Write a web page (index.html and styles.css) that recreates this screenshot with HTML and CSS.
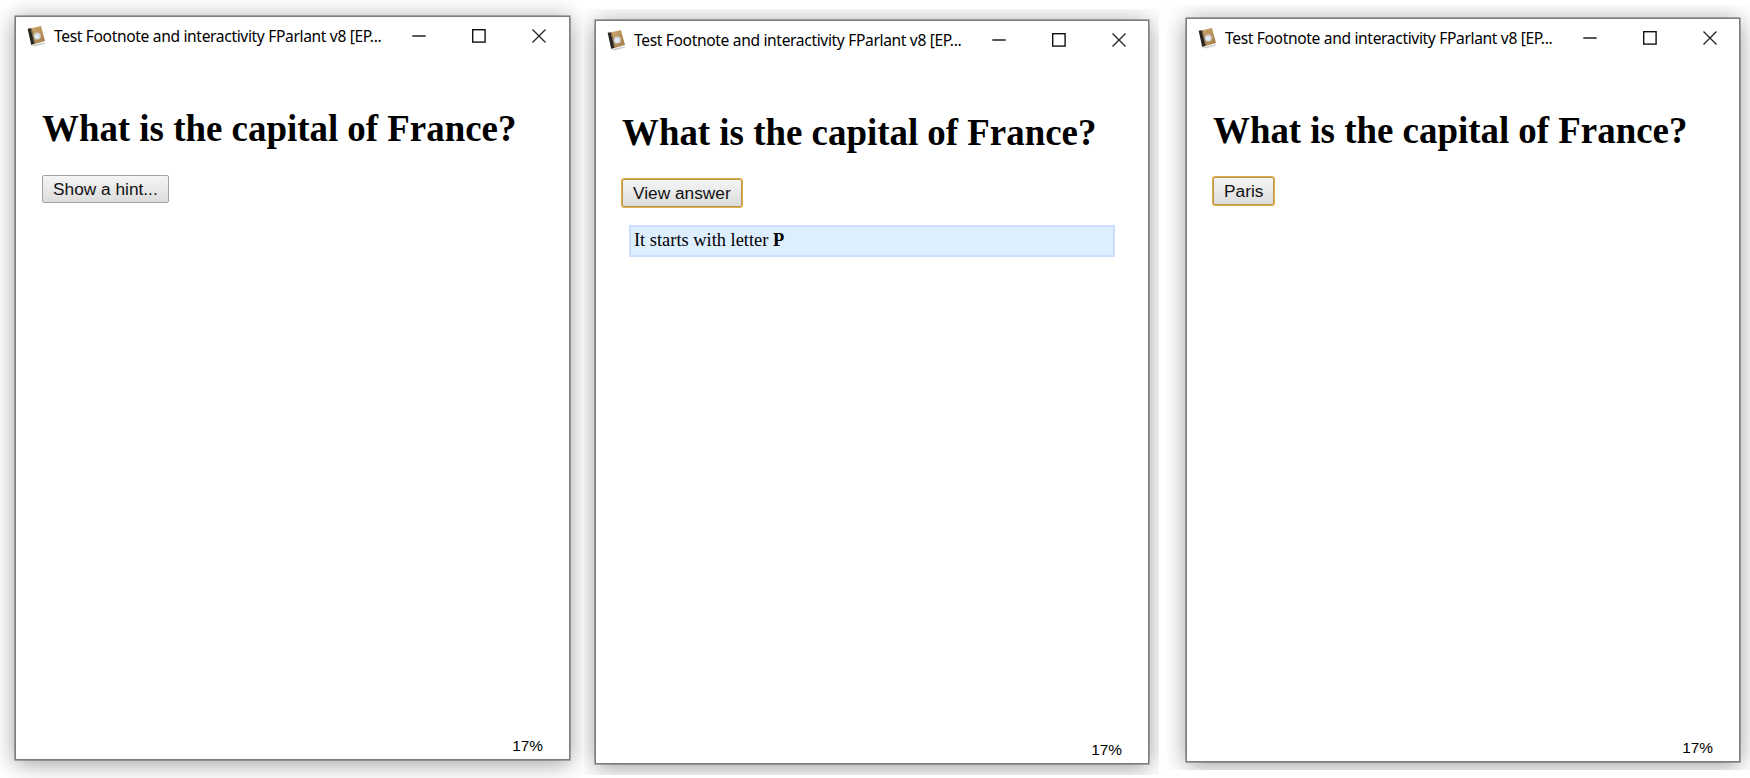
FILE: index.html
```
<!DOCTYPE html>
<html lang="en">
<head>
<meta charset="utf-8">
<title>Test Footnote and interactivity</title>
<link rel="stylesheet" href="styles.css">
</head>
<body>
<svg class="defs" width="0" height="0">
  <defs>
    <linearGradient id="cover" x1="0" y1="0" x2="1" y2="1"><stop offset="0" stop-color="#d0ab72"/><stop offset="1" stop-color="#a17a48"/></linearGradient>
    <filter id="soft" x="-20%" y="-20%" width="140%" height="140%"><feGaussianBlur stdDeviation="0.5"/></filter>
    <symbol id="book" viewBox="0 0 20 22">
      <g filter="url(#soft)">
        <path d="M4 20.5 17 17.5l1.5 1-11 3z" fill="#ccc"/>
        <path d="M3 3.5 14 1 18 16 6 19.5z" fill="url(#cover)"/>
        <path d="M.7 3.8 3.5 3.3 7.5 18.5 4.2 20z" fill="#25211e"/>
        <path d="M4.3 3.5 7.5 18" stroke="#70675c" stroke-width="1"/>
        <circle cx="10.3" cy="11" r="3.5" fill="#d3d3d3"/>
        <circle cx="10" cy="11.5" r="2" fill="#e3effc"/>
      </g>
    </symbol>
    <symbol id="min" viewBox="0 0 14 14"><path d="M.3 7H13.7" stroke="#111" stroke-width="1.4"/></symbol>
    <symbol id="max" viewBox="0 0 14 14"><rect x=".7" y=".7" width="12.4" height="12.4" fill="none" stroke="#111" stroke-width="1.4"/></symbol>
    <symbol id="close" viewBox="0 0 14 14"><path d="M.5.5l13 13M13.5.5l-13 13" stroke="#222" stroke-width="1.3"/></symbol>
  </defs>
</svg>

<section class="panel panel-first">
  <div class="window">
    <header class="titlebar">
      <svg class="book"><use href="#book"/></svg>
      <span class="title">Test Footnote and interactivity FParlant v8 [EP...</span>
      <div class="controls"><svg><use href="#min"/></svg><svg><use href="#max"/></svg><svg><use href="#close"/></svg></div>
    </header>
    <main class="content">
      <h1>What is the capital of France?</h1>
      <button class="btn">Show a hint...</button>
    </main>
    <footer class="progress">17%</footer>
  </div>
</section>

<section class="panel panel-second">
  <div class="window">
    <header class="titlebar">
      <svg class="book"><use href="#book"/></svg>
      <span class="title">Test Footnote and interactivity FParlant v8 [EP...</span>
      <div class="controls"><svg><use href="#min"/></svg><svg><use href="#max"/></svg><svg><use href="#close"/></svg></div>
    </header>
    <main class="content">
      <h1>What is the capital of France?</h1>
      <button class="btn focused">View answer</button>
      <p class="hint">It starts with letter <b>P</b></p>
    </main>
    <footer class="progress">17%</footer>
  </div>
</section>

<section class="panel panel-third">
  <div class="window">
    <header class="titlebar">
      <svg class="book"><use href="#book"/></svg>
      <span class="title">Test Footnote and interactivity FParlant v8 [EP...</span>
      <div class="controls"><svg><use href="#min"/></svg><svg><use href="#max"/></svg><svg><use href="#close"/></svg></div>
    </header>
    <main class="content">
      <h1>What is the capital of France?</h1>
      <button class="btn focused">Paris</button>
    </main>
    <footer class="progress">17%</footer>
  </div>
</section>
</body>
</html>
```

FILE: styles.css
```
* { box-sizing: border-box; }
body {
  margin: 0;
  width: 1750px;
  height: 778px;
  display: flex;
  align-items: flex-start;
  overflow: hidden;
  background: #fff;
  color: #000;
}
.defs { position: absolute; }
.panel { flex: none; overflow: hidden; }
.panel-first { width: 584px; height: 778px; padding: 16px 14px 0 15px; }
.panel-second { width: 575px; height: 766px; margin-top: 9px; padding: 11px 10px 0 11px; }
.panel-third { width: 583px; height: 765px; margin: 5px 0 0 8px; padding: 13px 10px 0 19px; }
.window {
  display: flex;
  flex-direction: column;
  height: 744px;
  background: #fff;
  border: 1px solid #7d7d7d;
  box-shadow: 0 0 0 .6px rgba(0, 0, 0, .45), 0 3px 22px rgba(0, 0, 0, .4);
}
.titlebar {
  display: flex;
  align-items: center;
  height: 38px;
  padding-left: 11px;
}
.book { width: 20px; height: 22px; margin-right: 7px; }
.title {
  font: 15.6px/20px "Noto Sans", sans-serif;
  letter-spacing: -.35px;
  white-space: nowrap;
  width: 330px;
}
.controls { display: flex; gap: 46px; margin-left: 28px; }
.controls svg { width: 14px; height: 14px; flex: none; }
.content { flex: 1; padding: 53px 33px 0 26px; }
h1 {
  margin: 0;
  font: bold 36.9px/42px "Liberation Serif", serif;
  white-space: nowrap;
}
.btn {
  display: block;
  height: 28px;
  margin: 25px 0 0;
  padding: 0 10px;
  font: 17.3px/24px "Liberation Sans", sans-serif;
  color: #111;
  background: linear-gradient(#f5f5f5, #dcdcdc);
  border: 1px solid #a3a3a3;
  border-radius: 2px;
}
.focused {
  border-color: #b9964e;
  box-shadow: 0 0 0 1px #e5ad45;
}
.hint {
  margin: 18px 0 0 7px;
  height: 32px;
  padding: 2px 3px;
  font: 18.4px/22px "Liberation Serif", serif;
  background: #def;
  border: 2px solid #cdf;
}
.progress {
  padding: 0 26px 3px 0;
  text-align: right;
  font: 15.4px/20px "Liberation Sans", sans-serif;
}
```
